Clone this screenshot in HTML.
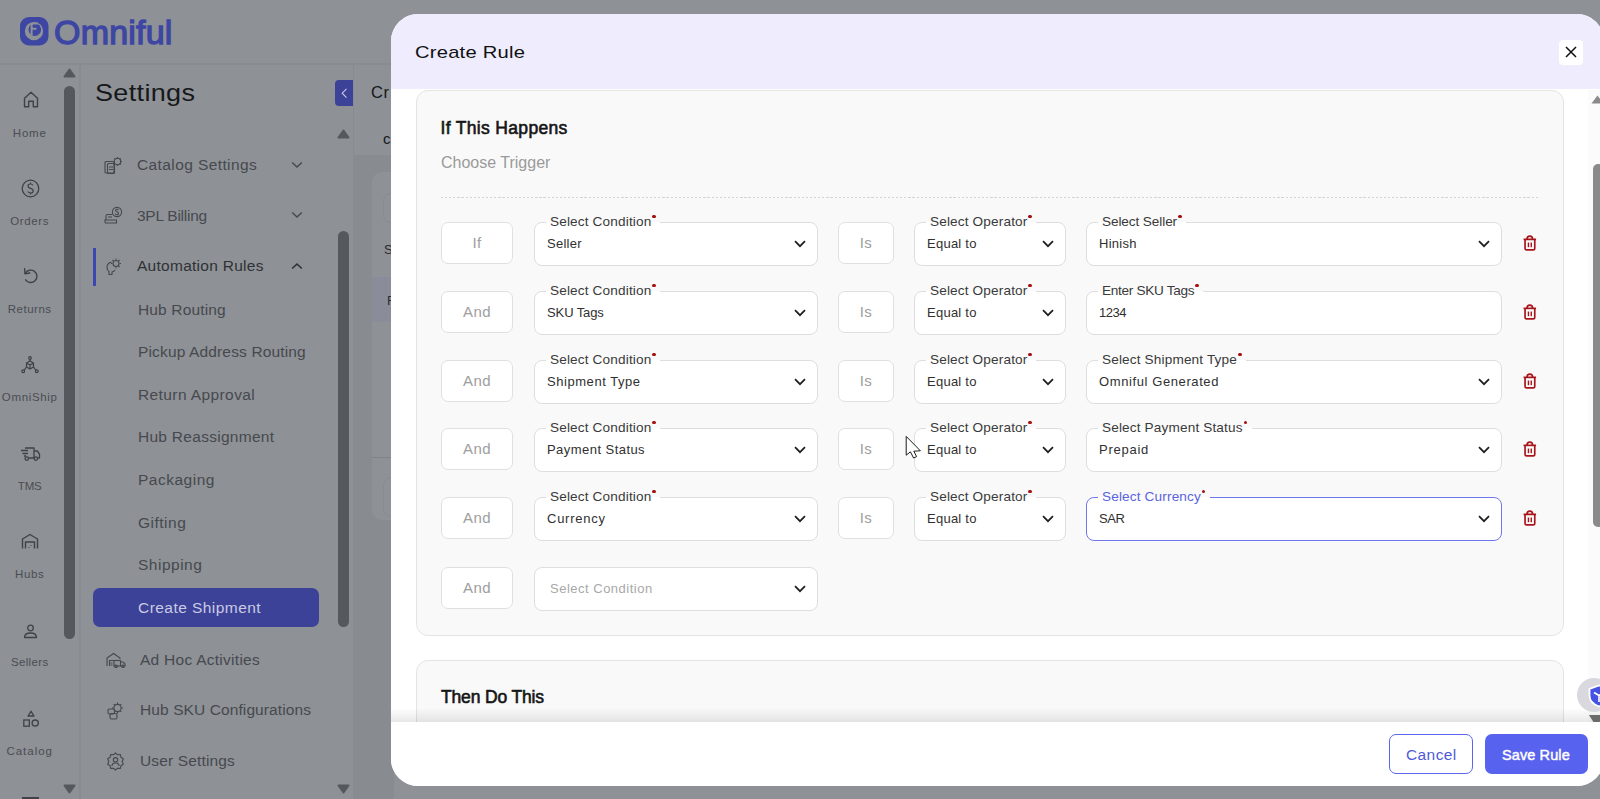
<!DOCTYPE html>
<html><head><meta charset="utf-8">
<style>
*{box-sizing:border-box;margin:0;padding:0}
html,body{width:1600px;height:799px;overflow:hidden;background:#8e9196;font-family:"Liberation Sans",sans-serif}
.a{position:absolute}
.t{position:absolute;white-space:nowrap;line-height:1}
/* background page */
#bg{position:absolute;left:0;top:0;width:1600px;height:799px;background:#8e9196}
.nav-lbl{position:absolute;font-size:11.5px;color:#4a4d52;white-space:nowrap;line-height:1;letter-spacing:0.5px;text-align:center;width:62px;left:-1.3px}
.side{position:absolute;font-size:15.5px;color:#46494e;white-space:nowrap;line-height:1;letter-spacing:0.15px}
.thumb{position:absolute;background:#55585d;border-radius:6px}
.arr-up{position:absolute;width:0;height:0;border-left:6px solid transparent;border-right:6px solid transparent;border-bottom:9px solid #55585d}
.arr-dn{position:absolute;width:0;height:0;border-left:6px solid transparent;border-right:6px solid transparent;border-top:9px solid #55585d}
/* modal */
#modal{position:absolute;left:391px;top:14px;width:1213px;height:772px;background:#fff;border-radius:27px;overflow:hidden}
#mhead{position:absolute;left:0;top:0;width:100%;height:75px;background:#eeecfd}
.card{position:absolute;background:#f9f9f9;border:1px solid #e3e3e3;border-radius:12px}
.box{position:absolute;background:#fff;border:1px solid #dedede;border-radius:8px}
.ifbox{position:absolute;background:#fff;border:1px solid #e0e0e0;border-radius:7px;color:#9e9e9e;font-size:15px;text-align:center;line-height:40px;letter-spacing:0.4px}
.lbl{position:absolute;top:-8px;font-size:13.6px;color:#3a3a3a;background:linear-gradient(to bottom,#f9f9f9 50%,#fff 50%);white-space:nowrap;line-height:1;padding:0 9px 0 4px;letter-spacing:0.15px}
.lbl i{position:absolute;right:4.5px;top:-0.5px;width:3.5px;height:3.5px;border-radius:50%;background:#a50f0f}
.val{position:absolute;left:12px;top:14px;font-size:13px;color:#303030;white-space:nowrap;line-height:1;letter-spacing:0.25px}
.chev{position:absolute;top:17px;width:12px;height:8px}
.trash{position:absolute;width:14px;height:16px}
.box.focus{border-color:#6f78ea}
.box.focus .lbl{color:#5b63e0}
.val.ph{color:#a8a8a8;font-size:13px}
</style></head><body>
<div id="bg">
  <!-- top bar line -->
  <div class="a" style="left:0;top:63px;width:1600px;height:2px;background:#888b94"></div>
  <div class="a" style="left:79px;top:64px;width:2px;height:735px;background:#888b94"></div>
  <div class="a" style="left:353px;top:64px;width:1px;height:735px;background:#888b94"></div>
  <!-- logo -->
  <svg class="a" style="left:20px;top:17px" width="29" height="29" viewBox="0 0 29 29"><rect x="0" y="0" width="28.5" height="28.5" rx="9" fill="#3d46a3"/><circle cx="14" cy="14.1" r="9.2" fill="#8e9196"/><circle cx="14.8" cy="12.6" r="6.3" fill="#3d46a3"/><path d="M11.6,18.5 V8.2 Q11.6,6.5 13.5,6.5 H17.8 M11.6,11.8 H16.5" fill="none" stroke="#8e9196" stroke-width="2"/></svg>
  <div class="t" style="left:54px;top:15px;font-size:34px;color:#3d46a3;letter-spacing:0.2px;-webkit-text-stroke:1.3px #3d46a3">Omniful</div>

  <!-- nav rail -->
  <svg class="a" style="left:63px;top:68px" width="13" height="10" viewBox="0 0 13 10"><path d="M6.5,1.5 L11.5,8.5 L1.5,8.5 Z" fill="#55585d" stroke="#55585d" stroke-width="2" stroke-linejoin="round"/></svg>
  <div class="thumb" style="left:64px;top:86px;width:11px;height:553px"></div>
  <svg class="a" style="left:63px;top:784px" width="13" height="10" viewBox="0 0 13 10"><path d="M1.5,1.5 L11.5,1.5 L6.5,8.5 Z" fill="#55585d" stroke="#55585d" stroke-width="2" stroke-linejoin="round"/></svg>
  <div class="nav-lbl" style="top:128px;letter-spacing:0.75px">Home</div>
  <div class="nav-lbl" style="top:216px;letter-spacing:0.60px">Orders</div>
  <div class="nav-lbl" style="top:304px;letter-spacing:0.50px">Returns</div>
  <div class="nav-lbl" style="top:392px;letter-spacing:0.65px">OmniShip</div>
  <div class="nav-lbl" style="top:481px;letter-spacing:-0.20px">TMS</div>
  <div class="nav-lbl" style="top:569px;letter-spacing:0.60px">Hubs</div>
  <div class="nav-lbl" style="top:657px;letter-spacing:0.35px">Sellers</div>
  <div class="nav-lbl" style="top:746px;letter-spacing:1.00px">Catalog</div>

  <!-- settings sidebar -->
  <div class="t" style="left:95px;top:81px;font-size:24px;color:#17181a;letter-spacing:0.3px;transform:scaleX(1.125);transform-origin:0 0">Settings</div>
  <div class="a" style="left:335px;top:80px;width:18px;height:26px;background:#3d4299;border-radius:4px 0 0 4px"></div>
  <svg class="a" style="left:337px;top:129px" width="13" height="10" viewBox="0 0 13 10"><path d="M6.5,1.5 L11.5,8.5 L1.5,8.5 Z" fill="#55585d" stroke="#55585d" stroke-width="2" stroke-linejoin="round"/></svg>
  <div class="thumb" style="left:338px;top:231px;width:11px;height:396px"></div>
  <svg class="a" style="left:337px;top:783.5px" width="13" height="10" viewBox="0 0 13 10"><path d="M1.5,1.5 L11.5,1.5 L6.5,8.5 Z" fill="#55585d" stroke="#55585d" stroke-width="2" stroke-linejoin="round"/></svg>

  <div class="side" style="left:137px;top:157px;letter-spacing:0.4px">Catalog Settings</div>
  <div class="side" style="left:137px;top:208px;letter-spacing:-0.25px">3PL Billing</div>
  <div class="a" style="left:93px;top:248px;width:3px;height:38px;background:#3d46b0"></div>
  <div class="side" style="left:137px;top:258px;letter-spacing:0.27px;color:#2e3135">Automation Rules</div>
  <div class="side" style="left:138px;top:302px">Hub Routing</div>
  <div class="side" style="left:138px;top:344px">Pickup Address Routing</div>
  <div class="side" style="left:138px;top:387px;letter-spacing:0.4px">Return Approval</div>
  <div class="side" style="left:138px;top:429px;letter-spacing:0.28px">Hub Reassignment</div>
  <div class="side" style="left:138px;top:472px;letter-spacing:0.5px">Packaging</div>
  <div class="side" style="left:138px;top:515px;letter-spacing:0.5px">Gifting</div>
  <div class="side" style="left:138px;top:557px;letter-spacing:0.5px">Shipping</div>
  <div class="a" style="left:93px;top:588px;width:226px;height:39px;background:#3d4299;border-radius:7px"></div>
  <div class="side" style="left:138px;top:600px;color:#c9cbe3;letter-spacing:0.45px">Create Shipment</div>
  <div class="side" style="left:140px;top:652px;letter-spacing:0.27px">Ad Hoc Activities</div>
  <div class="side" style="left:140px;top:702px;letter-spacing:0.1px">Hub SKU Configurations</div>
  <div class="side" style="left:140px;top:753px">User Settings</div>


  <!-- nav icons -->
  <svg class="a" style="left:23px;top:91px" width="16" height="17" viewBox="0 0 16 17"><path d="M1.5,7.2 L8,1.3 L14.5,7.2 L14.5,15.8 L10.3,15.8 L10.3,10.2 L5.7,10.2 L5.7,15.8 L1.5,15.8 Z" fill="none" stroke="#3f4247" stroke-width="1.4" stroke-linejoin="round"/></svg>
  <svg class="a" style="left:21px;top:179px" width="19" height="19" viewBox="0 0 19 19"><circle cx="9.5" cy="9.5" r="8.3" fill="none" stroke="#3f4247" stroke-width="1.3"/><path d="M12,6.3 Q11.3,5 9.5,5 Q7,5 7,7 Q7,8.8 9.5,9.4 Q12.2,10 12.2,12 Q12.2,14 9.5,14 Q7.5,14 6.8,12.6 M9.5,3.6 V5 M9.5,14 V15.4" fill="none" stroke="#3f4247" stroke-width="1.2"/></svg>
  <svg class="a" style="left:22px;top:267px" width="17" height="18" viewBox="0 0 17 18"><path d="M3.2,6.5 A6.2,6.2 0 1 1 3.6,12.8" fill="none" stroke="#3f4247" stroke-width="1.4" stroke-linecap="round"/><path d="M2.6,1.8 L3,6.8 L7.8,6" fill="none" stroke="#3f4247" stroke-width="1.4" stroke-linecap="round" stroke-linejoin="round"/></svg>
  <svg class="a" style="left:21px;top:356px" width="18" height="18" viewBox="0 0 18 18"><g fill="none" stroke="#3f4247" stroke-width="1.2"><circle cx="9" cy="2" r="1.3"/><path d="M9,3.3 V5"/><path d="M5.5,7 L9,5 L12.5,7 L12.5,11 L9,13 L5.5,11 Z M5.5,7 L9,9 L12.5,7 M9,9 V13"/><path d="M5.5,11 L3,14.3 M12.5,11 L15,14.3"/><circle cx="2.2" cy="15.3" r="1.4"/><circle cx="15.8" cy="15.3" r="1.4"/></g></svg>
  <svg class="a" style="left:20px;top:446px" width="21" height="16" viewBox="0 0 21 16"><g fill="none" stroke="#3f4247" stroke-width="1.3" stroke-linejoin="round"><path d="M5,2 H14 V12 H8.5 M14,5 H17.3 L19.5,8 V12 H17.5"/><circle cx="6.8" cy="12.6" r="1.7"/><circle cx="15.8" cy="12.6" r="1.7"/><path d="M1,4.5 H8 M2.5,7.5 H8 M4,10 H6"/></g></svg>
  <svg class="a" style="left:21px;top:533px" width="18" height="17" viewBox="0 0 18 17"><g fill="none" stroke="#3f4247" stroke-width="1.4" stroke-linejoin="round"><path d="M1.5,15.5 V6 L9,1.5 L16.5,6 V15.5"/><path d="M4.5,15.5 V9 H13.5 V15.5"/></g><path d="M7.5,14.5 h1 M9.5,12.5 h1" stroke="#3f4247" stroke-width="1"/></svg>
  <svg class="a" style="left:23px;top:624px" width="15" height="15" viewBox="0 0 15 15"><g fill="none" stroke="#3f4247" stroke-width="1.3"><circle cx="7.5" cy="4" r="2.8"/><path d="M1.5,13.5 Q1.5,9 7.5,9 Q13.5,9 13.5,13.5 Z" stroke-linejoin="round"/></g></svg>
  <svg class="a" style="left:22px;top:710px" width="18" height="18" viewBox="0 0 18 18"><g fill="none" stroke="#3f4247" stroke-width="1.3"><path d="M9,1.3 L12,6 H6 Z" stroke-linejoin="round"/><rect x="1.8" y="10" width="5.5" height="6.2"/><circle cx="13.2" cy="13.1" r="3.1"/></g></svg>
  <div class="a" style="left:22px;top:797px;width:17px;height:2px;background:#3f4247"></div>

  <!-- sidebar icons -->
  <svg class="a" style="left:104px;top:156px" width="19" height="19" viewBox="0 0 19 19"><g fill="none" stroke="#45484d" stroke-width="1.1"><rect x="1" y="5.5" width="9" height="11.5" rx="1"/><rect x="3.5" y="7.5" width="7" height="10" rx="1"/><path d="M5,11 h4 M5,13.5 h4"/><circle cx="13.5" cy="5.5" r="3.2"/><path d="M13.5,1 v1.3 M13.5,8.7 v1.3 M9,5.5 h1.3 M16.7,5.5 h1.3 M10.3,2.3 l1,1 M15.7,7.7 l1,1 M16.7,2.3 l-1,1"/></g></svg>
  <svg class="a" style="left:104px;top:206px" width="19" height="19" viewBox="0 0 19 19"><g fill="none" stroke="#45484d" stroke-width="1.1"><circle cx="13" cy="6" r="4.6"/><path d="M14.5,4 Q14,3.2 13,3.2 Q11.6,3.2 11.6,4.4 Q11.6,5.5 13,5.8 Q14.5,6.2 14.5,7.4 Q14.5,8.7 13,8.7 Q11.8,8.7 11.4,7.8"/><path d="M8.5,8.5 H3.5 Q2,8.5 2,10 V13.5 M1,14 H12.5 V17 H2 Q1,17 1,16 Z M4,11 h4"/></g></svg>
  <svg class="a" style="left:105px;top:257px" width="18" height="19" viewBox="0 0 18 19"><g fill="none" stroke="#45484d" stroke-width="1.1"><circle cx="11" cy="6.5" r="3"/><path d="M11,1.5 v1.3 M11,10.2 v1.3 M6,6.5 h1.3 M14.7,6.5 h1.3 M7.5,3 l1,1 M13.5,9 l1,1 M14.5,3 l-1,1"/><path d="M6.5,5 Q2,6 2,10.5 Q2,13 4,14.5 V17.5 H7 V15 Q9,14.5 10,13"/></g></svg>
  <svg class="a" style="left:106px;top:652px" width="20" height="16" viewBox="0 0 20 16"><g fill="none" stroke="#45484d" stroke-width="1.1"><path d="M1,14 V6 L7.5,1.5 L14,6 V7"/><path d="M3.5,14 V8.5 H9"/><rect x="8" y="8.5" width="6.5" height="5.5"/><path d="M14.5,10 H17 L19,12 V14 H14.5"/><circle cx="10" cy="14.3" r="1.3"/><circle cx="17" cy="14.3" r="1.3"/><path d="M4.5,11 h2 M4.5,13 h2"/></g></svg>
  <svg class="a" style="left:107px;top:701px" width="17" height="19" viewBox="0 0 17 19"><g fill="none" stroke="#45484d" stroke-width="1.1"><circle cx="10.5" cy="7" r="3.6"/><path d="M10.5,1.5 v1.5 M10.5,11 v1.5 M5,7 h1.5 M14.5,7 h1.5 M6.7,3.2 l1,1 M13.3,9.8 l1,1 M14.3,3.2 l-1,1"/><rect x="1" y="8" width="6.5" height="5" rx="1.5"/><rect x="3" y="12.5" width="7" height="5.5" rx="1.5"/></g></svg>
  <svg class="a" style="left:106px;top:752px" width="19" height="19" viewBox="0 0 19 19"><g fill="none" stroke="#45484d" stroke-width="1.1"><path d="M9.5,1 L11.6,2.8 L14.4,2.6 L14.9,5.3 L17.3,6.8 L16.2,9.5 L17.3,12.2 L14.9,13.7 L14.4,16.4 L11.6,16.2 L9.5,18 L7.4,16.2 L4.6,16.4 L4.1,13.7 L1.7,12.2 L2.8,9.5 L1.7,6.8 L4.1,5.3 L4.6,2.6 L7.4,2.8 Z" stroke-linejoin="round"/><circle cx="9.5" cy="7.8" r="2.2"/><path d="M5.8,13.8 Q6.5,10.8 9.5,10.8 Q12.5,10.8 13.2,13.8"/></g></svg>
  <!-- sidebar chevrons -->
  <svg class="a" style="left:291px;top:161px" width="12" height="8" viewBox="0 0 12 8"><polyline points="1.2,1.5 6,6 10.8,1.5" fill="none" stroke="#45484d" stroke-width="1.4"/></svg>
  <svg class="a" style="left:291px;top:211px" width="12" height="8" viewBox="0 0 12 8"><polyline points="1.2,1.5 6,6 10.8,1.5" fill="none" stroke="#45484d" stroke-width="1.4"/></svg>
  <svg class="a" style="left:291px;top:262px" width="12" height="8" viewBox="0 0 12 8"><polyline points="1.2,6.5 6,2 10.8,6.5" fill="none" stroke="#2e3135" stroke-width="1.6"/></svg>
  <svg class="a" style="left:339px;top:87px" width="10" height="12" viewBox="0 0 10 12"><polyline points="7.5,1.8 3.2,6.2 7.5,10.6" fill="none" stroke="#c9cbe3" stroke-width="1.1"/></svg>
  <!-- behind page -->
  <div class="a" style="left:354px;top:155px;width:40px;height:644px;background:#888b90"></div>
  <div class="a" style="left:372px;top:172px;width:40px;height:348px;background:#8e9196;border-radius:10px 0 0 10px"></div>
  <div class="a" style="left:372px;top:277px;width:20px;height:45px;background:#8a8c99"></div>
  <div class="a" style="left:372px;top:457px;width:20px;height:1px;background:#7f8287"></div>
  <div class="a" style="left:383px;top:193px;width:20px;height:30px;border:1px solid #888b90;border-radius:8px 0 0 8px"></div>
  <div class="a" style="left:383px;top:477px;width:20px;height:40px;border:1px solid #888b90;border-radius:8px 0 0 8px"></div>
  <div class="t" style="left:371px;top:84px;font-size:16.5px;color:#17181a;letter-spacing:0.5px">Cr</div>
  <div class="t" style="left:383px;top:131px;font-size:15px;color:#17181a">c</div>
  <div class="t" style="left:384px;top:243px;font-size:13px;color:#2a2c30">S</div>
  <div class="t" style="left:387px;top:294px;font-size:13px;color:#2a2c30">F</div>
</div>

<div id="modal">
  <div id="mhead"></div>
  <div class="t" style="left:24px;top:30px;font-size:17px;color:#111;letter-spacing:0.2px;transform:scaleX(1.185);transform-origin:0 0">Create Rule</div>
  <div class="a" style="left:1168px;top:26px;width:24px;height:25px;background:#fff;border-radius:4px"></div>
  <svg class="a" style="left:1174px;top:32px" width="12" height="12" viewBox="0 0 12 12"><path d="M1,1 L11,11 M11,1 L1,11" stroke="#111" stroke-width="1.5"/></svg>
  <!-- modal scrollbar -->
  <div class="a" style="left:1197px;top:76px;width:16px;height:632px;background:#fbfbfb"></div>
  <svg class="a" style="left:1200px;top:81px" width="13" height="9" viewBox="0 0 13 9"><path d="M6.5,0.5 L12.5,8.5 L0.5,8.5 Z" fill="#8a8a8a"/></svg>
  <div class="a" style="left:1202px;top:150px;width:11px;height:363px;background:#8a8a8a;border-radius:5px"></div>

  <div class="card" style="left:25px;top:76px;width:1148px;height:546px"></div>
  <div class="t" style="left:49.5px;top:105.5px;font-size:17.5px;color:#151515;letter-spacing:0.33px;-webkit-text-stroke:0.6px #151515">If This Happens</div>
  <div class="t" style="left:50px;top:141px;font-size:16px;color:#9a9a9a;letter-spacing:0px">Choose Trigger</div>
  <div class="a" style="left:50px;top:183px;width:1099px;height:1px;background:repeating-linear-gradient(to right,#d4d4d4 0 2.2px,transparent 2.2px 4.1px)"></div>
<!-- row 1 -->
<div class="ifbox" style="left:50px;top:208px;width:72px;height:42px">If</div>
<div class="box" style="left:143px;top:208px;width:284px;height:44px"><div class="lbl" style="left:11px">Select Condition<i></i></div><div class="val">Seller</div><svg class="chev" style="right:11px" viewBox="0 0 12 8"><polyline points="1,1.2 6,6.2 11,1.2" fill="none" stroke="#1e1e1e" stroke-width="1.7"/></svg></div>
<div class="ifbox" style="left:447px;top:208px;width:56px;height:42px">Is</div>
<div class="box" style="left:523px;top:208px;width:152px;height:44px"><div class="lbl" style="left:11px">Select Operator<i></i></div><div class="val">Equal to</div><svg class="chev" style="right:11px" viewBox="0 0 12 8"><polyline points="1,1.2 6,6.2 11,1.2" fill="none" stroke="#1e1e1e" stroke-width="1.7"/></svg></div>
<div class="box" style="left:695px;top:208px;width:416px;height:44px"><div class="lbl" style="left:11px;letter-spacing:-0.1px">Select Seller<i></i></div><div class="val">Hinish</div><svg class="chev" style="right:11px" viewBox="0 0 12 8"><polyline points="1,1.2 6,6.2 11,1.2" fill="none" stroke="#1e1e1e" stroke-width="1.7"/></svg></div>
<svg class="trash" style="left:1132px;top:221px" viewBox="0 0 15 17"><g fill="none" stroke="#a8141a" stroke-width="1.8"><line x1="0.6" y1="4.6" x2="14" y2="4.6"/><path d="M4.3,4.6 Q4.3,1.2 7.3,1.2 Q10.3,1.2 10.3,4.6"/><path d="M2.2,5 L2.2,14 Q2.2,15.8 4,15.8 L10.8,15.8 Q12.6,15.8 12.6,14 L12.6,5"/></g><rect x="5.1" y="8" width="1.5" height="5" fill="#a8141a"/><rect x="8.1" y="8" width="1.5" height="5" fill="#a8141a"/></svg>
<!-- row 2 -->
<div class="ifbox" style="left:50px;top:277px;width:72px;height:42px">And</div>
<div class="box" style="left:143px;top:277px;width:284px;height:44px"><div class="lbl" style="left:11px">Select Condition<i></i></div><div class="val" style="letter-spacing:-0.1px">SKU Tags</div><svg class="chev" style="right:11px" viewBox="0 0 12 8"><polyline points="1,1.2 6,6.2 11,1.2" fill="none" stroke="#1e1e1e" stroke-width="1.7"/></svg></div>
<div class="ifbox" style="left:447px;top:277px;width:56px;height:42px">Is</div>
<div class="box" style="left:523px;top:277px;width:152px;height:44px"><div class="lbl" style="left:11px">Select Operator<i></i></div><div class="val">Equal to</div><svg class="chev" style="right:11px" viewBox="0 0 12 8"><polyline points="1,1.2 6,6.2 11,1.2" fill="none" stroke="#1e1e1e" stroke-width="1.7"/></svg></div>
<div class="box" style="left:695px;top:277px;width:416px;height:44px"><div class="lbl" style="left:11px;letter-spacing:-0.3px">Enter SKU Tags<i></i></div><div class="val" style="letter-spacing:-0.5px">1234</div></div>
<svg class="trash" style="left:1132px;top:290px" viewBox="0 0 15 17"><g fill="none" stroke="#a8141a" stroke-width="1.8"><line x1="0.6" y1="4.6" x2="14" y2="4.6"/><path d="M4.3,4.6 Q4.3,1.2 7.3,1.2 Q10.3,1.2 10.3,4.6"/><path d="M2.2,5 L2.2,14 Q2.2,15.8 4,15.8 L10.8,15.8 Q12.6,15.8 12.6,14 L12.6,5"/></g><rect x="5.1" y="8" width="1.5" height="5" fill="#a8141a"/><rect x="8.1" y="8" width="1.5" height="5" fill="#a8141a"/></svg>
<!-- row 3 -->
<div class="ifbox" style="left:50px;top:346px;width:72px;height:42px">And</div>
<div class="box" style="left:143px;top:346px;width:284px;height:44px"><div class="lbl" style="left:11px">Select Condition<i></i></div><div class="val" style="letter-spacing:0.55px">Shipment Type</div><svg class="chev" style="right:11px" viewBox="0 0 12 8"><polyline points="1,1.2 6,6.2 11,1.2" fill="none" stroke="#1e1e1e" stroke-width="1.7"/></svg></div>
<div class="ifbox" style="left:447px;top:346px;width:56px;height:42px">Is</div>
<div class="box" style="left:523px;top:346px;width:152px;height:44px"><div class="lbl" style="left:11px">Select Operator<i></i></div><div class="val">Equal to</div><svg class="chev" style="right:11px" viewBox="0 0 12 8"><polyline points="1,1.2 6,6.2 11,1.2" fill="none" stroke="#1e1e1e" stroke-width="1.7"/></svg></div>
<div class="box" style="left:695px;top:346px;width:416px;height:44px"><div class="lbl" style="left:11px">Select Shipment Type<i></i></div><div class="val" style="letter-spacing:0.6px">Omniful Generated</div><svg class="chev" style="right:11px" viewBox="0 0 12 8"><polyline points="1,1.2 6,6.2 11,1.2" fill="none" stroke="#1e1e1e" stroke-width="1.7"/></svg></div>
<svg class="trash" style="left:1132px;top:359px" viewBox="0 0 15 17"><g fill="none" stroke="#a8141a" stroke-width="1.8"><line x1="0.6" y1="4.6" x2="14" y2="4.6"/><path d="M4.3,4.6 Q4.3,1.2 7.3,1.2 Q10.3,1.2 10.3,4.6"/><path d="M2.2,5 L2.2,14 Q2.2,15.8 4,15.8 L10.8,15.8 Q12.6,15.8 12.6,14 L12.6,5"/></g><rect x="5.1" y="8" width="1.5" height="5" fill="#a8141a"/><rect x="8.1" y="8" width="1.5" height="5" fill="#a8141a"/></svg>
<!-- row 4 -->
<div class="ifbox" style="left:50px;top:414px;width:72px;height:42px">And</div>
<div class="box" style="left:143px;top:414px;width:284px;height:44px"><div class="lbl" style="left:11px">Select Condition<i></i></div><div class="val" style="letter-spacing:0.45px">Payment Status</div><svg class="chev" style="right:11px" viewBox="0 0 12 8"><polyline points="1,1.2 6,6.2 11,1.2" fill="none" stroke="#1e1e1e" stroke-width="1.7"/></svg></div>
<div class="ifbox" style="left:447px;top:414px;width:56px;height:42px">Is</div>
<div class="box" style="left:523px;top:414px;width:152px;height:44px"><div class="lbl" style="left:11px">Select Operator<i></i></div><div class="val">Equal to</div><svg class="chev" style="right:11px" viewBox="0 0 12 8"><polyline points="1,1.2 6,6.2 11,1.2" fill="none" stroke="#1e1e1e" stroke-width="1.7"/></svg></div>
<div class="box" style="left:695px;top:414px;width:416px;height:44px"><div class="lbl" style="left:11px">Select Payment Status<i></i></div><div class="val" style="letter-spacing:0.75px">Prepaid</div><svg class="chev" style="right:11px" viewBox="0 0 12 8"><polyline points="1,1.2 6,6.2 11,1.2" fill="none" stroke="#1e1e1e" stroke-width="1.7"/></svg></div>
<svg class="trash" style="left:1132px;top:427px" viewBox="0 0 15 17"><g fill="none" stroke="#a8141a" stroke-width="1.8"><line x1="0.6" y1="4.6" x2="14" y2="4.6"/><path d="M4.3,4.6 Q4.3,1.2 7.3,1.2 Q10.3,1.2 10.3,4.6"/><path d="M2.2,5 L2.2,14 Q2.2,15.8 4,15.8 L10.8,15.8 Q12.6,15.8 12.6,14 L12.6,5"/></g><rect x="5.1" y="8" width="1.5" height="5" fill="#a8141a"/><rect x="8.1" y="8" width="1.5" height="5" fill="#a8141a"/></svg>
<!-- row 5 -->
<div class="ifbox" style="left:50px;top:483px;width:72px;height:42px">And</div>
<div class="box" style="left:143px;top:483px;width:284px;height:44px"><div class="lbl" style="left:11px">Select Condition<i></i></div><div class="val" style="letter-spacing:0.75px">Currency</div><svg class="chev" style="right:11px" viewBox="0 0 12 8"><polyline points="1,1.2 6,6.2 11,1.2" fill="none" stroke="#1e1e1e" stroke-width="1.7"/></svg></div>
<div class="ifbox" style="left:447px;top:483px;width:56px;height:42px">Is</div>
<div class="box" style="left:523px;top:483px;width:152px;height:44px"><div class="lbl" style="left:11px">Select Operator<i></i></div><div class="val">Equal to</div><svg class="chev" style="right:11px" viewBox="0 0 12 8"><polyline points="1,1.2 6,6.2 11,1.2" fill="none" stroke="#1e1e1e" stroke-width="1.7"/></svg></div>
<div class="box focus" style="left:695px;top:483px;width:416px;height:44px"><div class="lbl" style="left:11px">Select Currency<i></i></div><div class="val" style="letter-spacing:-0.4px">SAR</div><svg class="chev" style="right:11px" viewBox="0 0 12 8"><polyline points="1,1.2 6,6.2 11,1.2" fill="none" stroke="#1e1e1e" stroke-width="1.7"/></svg></div>
<svg class="trash" style="left:1132px;top:496px" viewBox="0 0 15 17"><g fill="none" stroke="#a8141a" stroke-width="1.8"><line x1="0.6" y1="4.6" x2="14" y2="4.6"/><path d="M4.3,4.6 Q4.3,1.2 7.3,1.2 Q10.3,1.2 10.3,4.6"/><path d="M2.2,5 L2.2,14 Q2.2,15.8 4,15.8 L10.8,15.8 Q12.6,15.8 12.6,14 L12.6,5"/></g><rect x="5.1" y="8" width="1.5" height="5" fill="#a8141a"/><rect x="8.1" y="8" width="1.5" height="5" fill="#a8141a"/></svg>
<!-- row 6 -->
<div class="ifbox" style="left:50px;top:553px;width:72px;height:42px">And</div>
<div class="box" style="left:143px;top:553px;width:284px;height:44px"><div class="val ph" style="left:15px;letter-spacing:0.5px">Select Condition</div><svg class="chev" style="right:11px" viewBox="0 0 12 8"><polyline points="1,1.2 6,6.2 11,1.2" fill="none" stroke="#1e1e1e" stroke-width="1.7"/></svg></div>
  <div class="card" style="left:25px;top:646px;width:1148px;height:200px"></div>
  <div class="t" style="left:50px;top:675px;font-size:17.5px;color:#151515;letter-spacing:-0.15px;-webkit-text-stroke:0.6px #151515">Then Do This</div>
  <div class="a" style="left:0;top:694px;width:100%;height:14px;background:linear-gradient(to bottom,rgba(0,0,0,0),rgba(0,0,0,0.09))"></div>
  <div class="a" style="left:1186px;top:664px;width:34px;height:34px;border-radius:50%;background:#d8d8de"></div>
  <svg class="a" style="left:1197px;top:670px" width="22" height="24" viewBox="0 0 22 24"><path d="M11,1.5 L20.5,5 V11.5 Q20.5,19 11,22.5 Q1.5,19 1.5,11.5 V5 Z" fill="#4652e4" stroke="#fff" stroke-width="1.8"/><path d="M6,8.5 L11,11.5 L16,8.5 M11,11.5 V18" stroke="#fff" stroke-width="1.6" fill="none"/></svg>
  <svg class="a" style="left:1198px;top:701px" width="15" height="8" viewBox="0 0 15 8"><path d="M0,0 L15,0 L10,8 L5,8 Z" fill="#6b6b6b"/></svg>
  <div class="a" style="left:0;top:708px;width:100%;height:64px;background:#fff"></div>
  <div class="a" style="left:998px;top:720px;width:84px;height:40px;border:1px solid #5a66ee;border-radius:7px;background:#fff"></div>
  <div class="t" style="left:1015px;top:733px;font-size:15.5px;color:#4f5bd5;letter-spacing:0.4px">Cancel</div>
  <div class="a" style="left:1094px;top:720px;width:103px;height:40px;background:#5762ef;border-radius:7px"></div>
  <div class="t" style="left:1111px;top:734px;font-size:14.5px;color:#fff;letter-spacing:0.1px;-webkit-text-stroke:0.45px #fff">Save Rule</div>
</div>
<svg class="a" style="left:905px;top:435px" width="18" height="25" viewBox="0 0 18 25"><path d="M1.2,1.4 L1.2,20.2 L5.4,16.8 L8.6,23 L11.6,21.6 L8.8,16.2 L15.4,15.8 Z" fill="#fff" stroke="#1a1a1a" stroke-width="1" stroke-linejoin="miter"/></svg>
</body></html>
